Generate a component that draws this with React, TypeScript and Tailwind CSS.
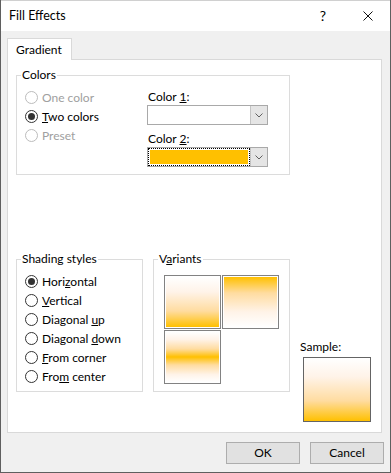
import type { ReactNode } from "react";

const GOLD = "#ffc000";
// office-style soft blend, stays pale longer than a plain linear mix
const DOWN = `linear-gradient(to bottom, #ffffff 0%, #fff3e8 30%, #ffdca0 68%, ${GOLD} 100%)`;
const UP = `linear-gradient(to top, #ffffff 0%, #fff3e8 30%, #ffdca0 68%, ${GOLD} 100%)`;
const MID = `linear-gradient(to bottom, #ffffff 0%, #fff3e8 15%, #ffdca0 34%, ${GOLD} 50%, #ffdca0 66%, #fff3e8 85%, #ffffff 100%)`;

function Mn({ children }: { children: ReactNode }) {
  return <span className="underline underline-offset-[1px]">{children}</span>;
}

function Radio({
  label,
  checked = false,
  disabled = false,
}: {
  label: ReactNode;
  checked?: boolean;
  disabled?: boolean;
}) {
  return (
    <div className="flex h-[19px] items-center">
      <span
        className={
          "flex h-[13px] w-[13px] items-center justify-center rounded-full border bg-white " +
          (disabled ? "border-[#bcbcbc]" : "border-[#333333]")
        }
      >
        {checked && <span className="h-[7px] w-[7px] rounded-full bg-[#333333]" />}
      </span>
      <span className={"ml-[4px] " + (disabled ? "text-[#a0a0a0]" : "text-black")}>{label}</span>
    </div>
  );
}

function Group({
  title,
  className,
  children,
}: {
  title: ReactNode;
  className: string;
  children: ReactNode;
}) {
  return (
    <div className={"relative border border-[#dcdcdc] " + className}>
      <span className="absolute left-[4px] top-[-9px] bg-white px-px leading-[16px]">{title}</span>
      {children}
    </div>
  );
}

function Chevron() {
  return (
    <svg width="8" height="5" viewBox="0 0 8 5" fill="none">
      <polyline points="0.5,0.5 4,4 7.5,0.5" stroke="#606060" strokeWidth="1" />
    </svg>
  );
}

function Combo({ children }: { children?: ReactNode }) {
  return (
    <div className="flex h-[20px] w-[121px] border border-[#a9a9a9] bg-white">
      <div className="flex-1">{children}</div>
      <div className="flex w-[17px] items-center justify-center border-l border-[#c4c4c4] bg-[#e5e5e5]">
        <Chevron />
      </div>
    </div>
  );
}

function Tile({ gradient }: { gradient: string }) {
  return (
    <div className="h-[54px] w-[57px] border border-[#828282] bg-white p-px">
      <div className="h-full w-full" style={{ background: gradient }} />
    </div>
  );
}

export default function App() {
  return (
    <div className="flex h-[473px] w-[391px] flex-col border-x border-b border-[#5f5f5f] bg-[#f0f0f0] font-['Segoe_UI',Lato,sans-serif] text-[12px] leading-[16px] text-black">
      {/* title bar */}
      <div className="flex h-[31px] items-center border-t border-[#d0d0d0] bg-white pl-[8px]">
        <span className="text-[12.5px]">Fill Effects</span>
        <span className="ml-auto mr-[37px] text-[14px]">?</span>
        <svg className="mr-[17px]" width="10" height="10" viewBox="0 0 10 10">
          <path d="M0.5 0.5 L9.5 9.5 M9.5 0.5 L0.5 9.5" stroke="#111" strokeWidth="1" />
        </svg>
      </div>

      <div className="flex flex-col pl-[6px] pt-[7px]">
        {/* tab */}
        <div className="relative z-10 -mb-px flex h-[22px] w-[65px] items-center border border-b-0 border-[#d9d9d9] bg-white pl-[8px]">
          Gradient
        </div>

        {/* tab panel */}
        <div className="flex h-[374px] w-[375px] flex-col border border-[#d9d9d9] bg-white pl-[8px] pt-[15px]">
          <Group title="Colors" className="flex h-[100px] w-[274px]">
            <div className="flex w-[130px] flex-col pl-[8px] pt-[12px]">
              <Radio label="One color" disabled />
              <Radio
                label={
                  <>
                    <Mn>T</Mn>wo colors
                  </>
                }
                checked
              />
              <Radio label="Preset" disabled />
            </div>
            <div className="flex flex-col pt-[12px]">
              <div className="h-[17px] pl-px leading-[17px]">
                Color <Mn>1</Mn>:
              </div>
              <Combo />
              <div className="mt-[5px] h-[17px] pl-px leading-[17px]">
                Color <Mn>2</Mn>:
              </div>
              <Combo>
                <div className="h-full w-full border border-dotted border-black p-px">
                  <div className="h-full w-full bg-[#ffc000]" />
                </div>
              </Combo>
            </div>
          </Group>

          <div className="mt-[84px] flex items-start">
            <Group title="Shading styles" className="h-[133px] w-[127px] pl-[8px] pt-[12px]">
              <Radio
                label={
                  <>
                    Hori<Mn>z</Mn>ontal
                  </>
                }
                checked
              />
              <Radio
                label={
                  <>
                    <Mn>V</Mn>ertical
                  </>
                }
              />
              <Radio
                label={
                  <>
                    Diagonal <Mn>u</Mn>p
                  </>
                }
              />
              <Radio
                label={
                  <>
                    Diagonal <Mn>d</Mn>own
                  </>
                }
              />
              <Radio
                label={
                  <>
                    <Mn>F</Mn>rom corner
                  </>
                }
              />
              <Radio
                label={
                  <>
                    Fro<Mn>m</Mn> center
                  </>
                }
              />
            </Group>

            <Group
              title={
                <>
                  V<Mn>a</Mn>riants
                </>
              }
              className="ml-[10px] h-[133px] w-[137px] pl-[10px] pt-[15px]"
            >
              <div className="grid w-[115px] grid-cols-2 gap-px">
                <Tile gradient={DOWN} />
                <Tile gradient={UP} />
                <Tile gradient={MID} />
              </div>
            </Group>

            <div className="ml-[10px] mt-[79px] flex flex-col">
              <div className="h-[17px] leading-[17px]">Sample:</div>
              <div
                className="ml-[3px] mt-[2px] h-[65px] w-[68px] border border-[#646464]"
                style={{ background: DOWN }}
              />
            </div>
          </div>
        </div>
      </div>

      {/* buttons */}
      <div className="mt-[9px] flex justify-end gap-[10px] pr-[6px]">
        <button className="h-[22px] w-[74px] border border-[#adadad] bg-[#e1e1e1]">OK</button>
        <button className="h-[22px] w-[74px] border border-[#adadad] bg-[#e1e1e1]">Cancel</button>
      </div>
    </div>
  );
}
